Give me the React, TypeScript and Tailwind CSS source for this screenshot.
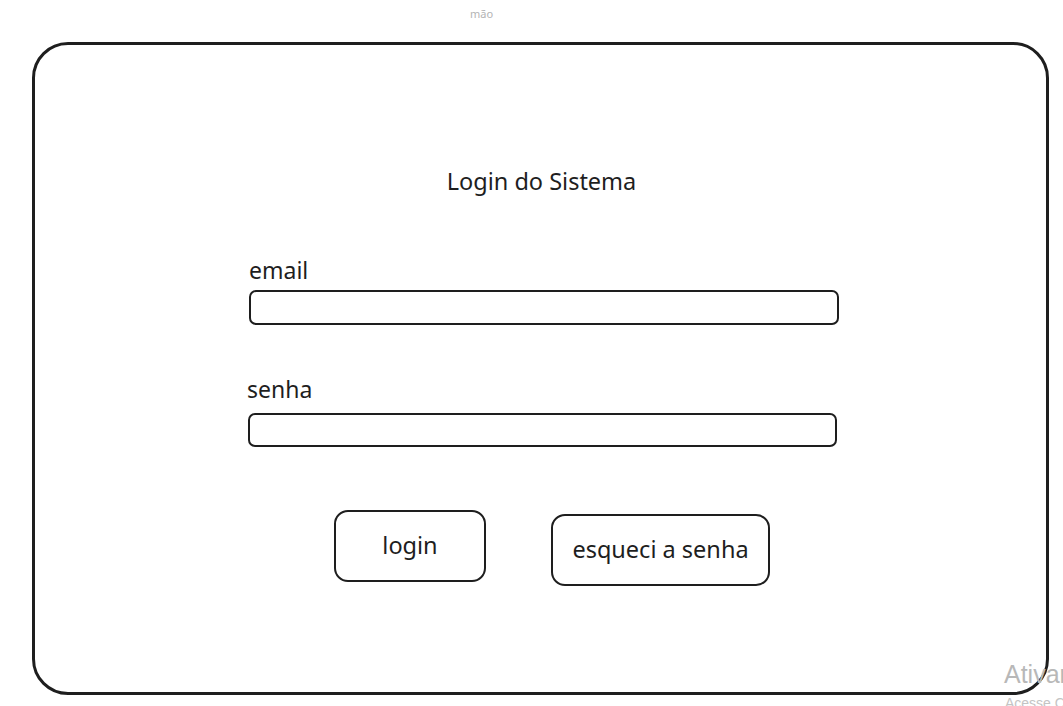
import React from "react";

export default function App() {
  return (
    <div
      className="relative w-[1063px] h-[706px] overflow-hidden bg-white text-[#1e1e1e]"
      style={{ fontFamily: '"Noto Sans", "Open Sans", sans-serif' }}
    >
      <div className="h-[42px]">
        <div className="pt-[6px] ml-[470px] text-[11px] leading-[16px] text-[#b4b4b4]">
          mão
        </div>
      </div>
      <div className="ml-[32px] w-[1017px] h-[653px] rounded-[36px] border-[3px] border-[#1e1e1e] flex flex-col">
        <div className="mt-[122px] text-center text-[23.5px] leading-[28px] pl-[2px]">
          Login do Sistema
        </div>
        <div className="ml-[214px] w-[590px] flex flex-col">
          <div className="mt-[61px] text-[23px] leading-[28px]">email</div>
          <div className="mt-[6px] h-[35px] rounded-[7px] border-[2.5px] border-[#1e1e1e]" />
          <div className="mt-[50px] -ml-[2px] text-[23px] leading-[28px]">senha</div>
          <div className="mt-[10px] -ml-[1px] w-[589px] h-[34px] rounded-[7px] border-[2.5px] border-[#1e1e1e]" />
        </div>
        <div className="ml-[299px] mt-[63px] flex items-start gap-[65px]">
          <div className="w-[152px] h-[72px] rounded-[14px] border-[2.5px] border-[#1e1e1e] flex items-center justify-center text-[23.5px]">
            login
          </div>
          <div className="mt-[4px] w-[219px] h-[72px] rounded-[14px] border-[2.5px] border-[#1e1e1e] flex items-center justify-center text-[23.5px]">
            esqueci a senha
          </div>
        </div>
      </div>
      <div
        className="absolute left-[1004px] top-[659px] text-[25px] leading-[30px] text-[#b8b8b8] whitespace-nowrap"
        style={{ fontFamily: '"Liberation Sans", sans-serif' }}
      >
        Ativar o Windows
      </div>
      <div
        className="absolute left-[1005px] top-[695px] text-[14px] leading-[16px] text-[#c4c4c4] whitespace-nowrap"
        style={{ fontFamily: '"Liberation Sans", sans-serif' }}
      >
        Acesse Configurações
      </div>
    </div>
  );
}
